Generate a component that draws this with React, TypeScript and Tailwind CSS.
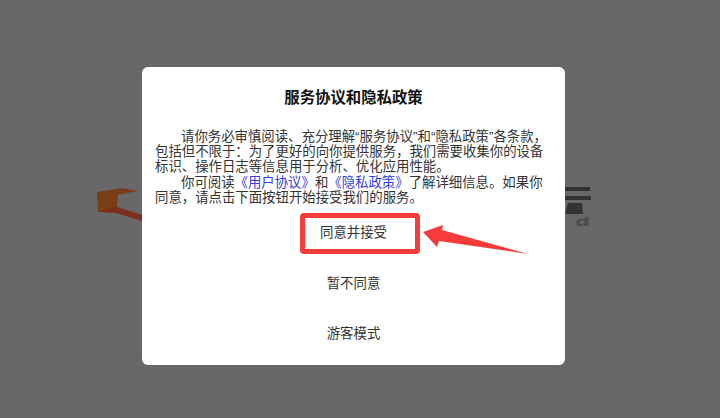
import React from "react";

const cjk = "font-['Liberation_Sans','Noto_Sans_CJK_SC',sans-serif]";

export default function App() {
  return (
    <div className={`${cjk} relative h-[418px] w-[720px] overflow-hidden bg-[#686868] pl-[142px] pt-[67px]`}>
      {/* Blurred page behind the overlay */}
      <svg className="absolute left-[90px] top-[180px] blur-[0.6px]" width="52" height="45" viewBox="0 0 52 45">
        <path d="M7 12 L33 8 L47 11 L28 15 L27 28 L8 32 Z" fill="#7a3d18" />
        <path d="M27 27 L52 35 L52 41 L26 33 L8 32 Z" fill="#7c2d1c" />
      </svg>
      <svg className="absolute left-[565px] top-[185px] blur-[0.5px]" width="30" height="32" viewBox="0 0 30 32">
        <rect x="0" y="2" width="25" height="4" fill="#333333" />
        <rect x="0" y="11" width="26" height="4" fill="#333333" />
        <path d="M3 18 L17 18 L18 29 L0 29 Z" fill="#333333" />
      </svg>
      <span className="absolute left-[579px] top-[215px] scale-x-200 text-[12px] font-bold leading-[14px] text-[#444] blur-[0.4px]">d</span>

      {/* Dialog */}
      <div className="relative flex h-[298px] w-[423px] flex-col items-center rounded-[6px] bg-white">
        <h1 className="mt-[20px] text-[15.4px] font-bold leading-[21px] text-[#111]">服务协议和隐私政策</h1>
        <div className="ml-[13px] mt-[21px] w-[394px] self-start text-[13.4px] leading-[15.2px] text-[#333]">
          <p className="indent-[26px]">请你务必审慎阅读、充分理解“服务协议”和“隐私政策”各条款，包括但不限于：为了更好的向你提供服务，我们需要收集你的设备标识、操作日志等信息用于分析、优化应用性能。</p>
          <p className="indent-[26px]">
            你可阅读<span className="inline-block indent-0 text-[#3340d8]">《用户协议》</span>和<span className="inline-block indent-0 text-[#3340d8]">《隐私政策》</span>了解详细信息。如果你同意，请点击下面按钮开始接受我们的服务。
          </p>
        </div>
        <button className="ml-[158px] mt-[8px] flex h-[41px] w-[120px] items-center self-start rounded-[4px] border-[5px] border-[#f73a3a] pl-[15px] text-[13.4px] text-[#333]">
          同意并接受
        </button>
        <button className="mt-[5px] flex h-[50px] w-[120px] items-center justify-center text-[13.4px] text-[#333]">
          暂不同意
        </button>
        <button className="flex h-[50px] w-[120px] items-center justify-center text-[13.4px] text-[#333]">
          游客模式
        </button>
      </div>

      {/* Annotation arrow */}
      <svg className="absolute left-[420px] top-[222px]" width="112" height="38" viewBox="0 0 112 38">
        <path d="M3 10 L23 3 L22 8 L108 32 L19 19 L17 25 Z" fill="#f73a3a" />
      </svg>
    </div>
  );
}
